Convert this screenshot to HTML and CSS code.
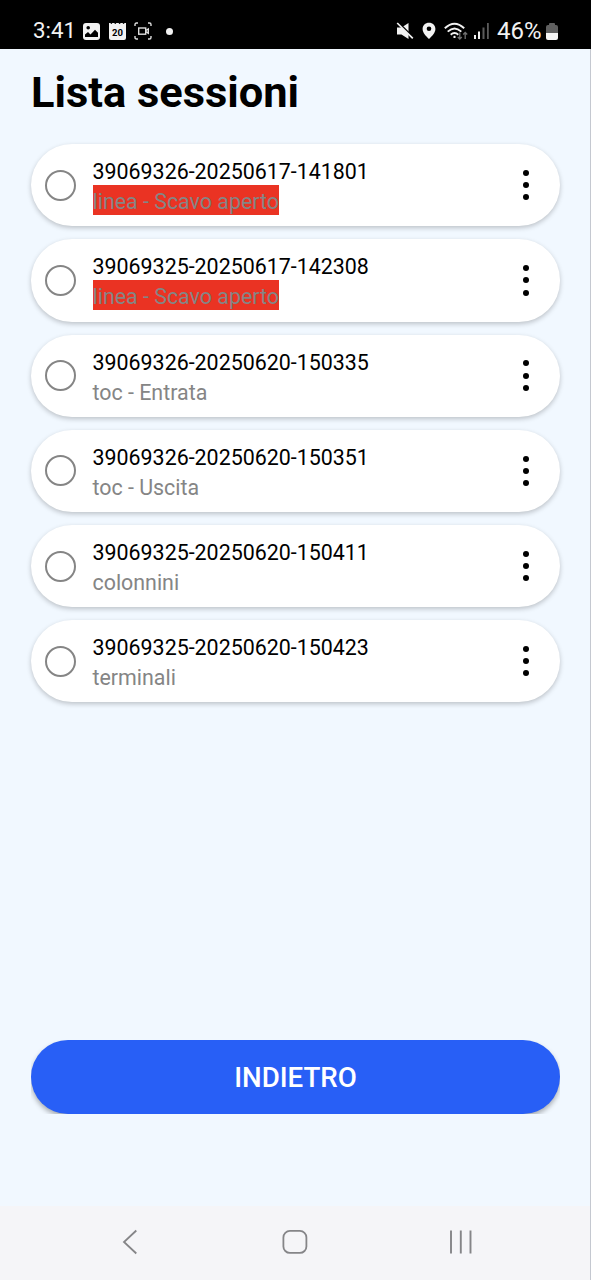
FILE: index.html
```html
<!DOCTYPE html>
<html lang="it">
<head>
<meta charset="utf-8">
<title>Lista sessioni</title>
<link rel="stylesheet" href="styles.css">
</head>
<body>
<div class="screen">
  <header class="status">
    <div class="status-left">
      <span class="clock">3:41</span>
      <svg class="ic-photo" width="17" height="17" viewBox="0 0 17 17"><rect width="17" height="17" rx="3" fill="#f2f2f2"/><circle cx="5.2" cy="4.8" r="1.8"/><path d="M2 14V11.5L5 9l2.5 2.5L12 6.8l3 3V14Z"/></svg>
      <svg class="ic-cal" width="17" height="17" viewBox="0 0 17 17"><path d="M0 0h1.5q.8 2 1.8 0h2q1 2 2 0h2.3q1 2 2 0h2q1 2 1.9 0H17v15q0 2-2 2H2q-2 0-2-2Z" fill="#f2f2f2"/><text x="8.5" y="12.8" text-anchor="middle" class="cal-day">20</text></svg>
      <svg class="ic-rec" width="18" height="18" viewBox="0 0 18 18" fill="none" stroke="#ddd" stroke-width="1.4"><path d="M1 4V2.5Q1 1 2.5 1H4M14 1h1.5Q17 1 17 2.500V4M17 14v1.500q0 1.500-1.500 1.500H14M4 17H2.500Q1 17 1 15.500V14"/><rect x="4.700" y="6" width="7" height="6.200"/><path d="m11.700 8.500 2.600-1.500v4.200l-2.600-1.500"/></svg>
      <span class="dot"></span>
    </div>
    <div class="status-right">
      <svg class="ic-mute" width="18" height="18" viewBox="0 0 18 18"><path d="M1 5.500h4.500L12.500 1v16L5.500 12.500H1Z" fill="#f2f2f2"/><path d="M1.600 0 17.500 15.600" stroke="#000" stroke-width="2"/><path d="M1.200 1 16.800 16.400" stroke="#f2f2f2" stroke-width="1.700"/></svg>
      <svg class="ic-pin" width="14" height="18" viewBox="0 0 14 18"><path d="M7 .8C3.200.8.600 3.500.600 7c0 4 3.600 7.200 6.400 10 2.800-2.800 6.400-6 6.400-10C13.400 3.500 10.800.8 7 .8Z" fill="#f2f2f2"/><circle cx="7" cy="6.700" r="2.300"/></svg>
      <svg class="ic-wifi" width="24" height="19" viewBox="0 0 24 19" fill="none" stroke="#f2f2f2" stroke-width="1.900"><path d="M.8 6.300q9.700-9.200 19.400 0M3.700 9.600q6.800-6.400 13.600 0M6.700 12.800q3.800-3.500 7.600 0"/><circle cx="10.500" cy="14.900" r="1.200" fill="#f2f2f2" stroke="none"/><path d="M15.800 10.500v6.500m-2-2 2 2 2-2M21.200 17v-6.500m-2 2 2-2 2 2" stroke="#707070" stroke-width="1.300"/></svg>
      <svg class="ic-signal" width="15" height="16" viewBox="0 0 15 16"><path fill="#f2f2f2" d="M0 12h2v4H0zM4 8.500h2V16H4z"/><path fill="#5c5c5c" d="M8.500 4.500h2V16h-2zM13 0h1.800v16H13z"/></svg>
      <span class="battery-text">46%</span>
      <svg class="ic-batt" width="12" height="17" viewBox="0 0 12 17"><path d="M3 2V1q0-1 1-1h4q1 0 1 1v1h1q2 0 2 2v6H0V4q0-2 2-2Z" fill="#606060"/><path d="M0 10h12v5q0 2-2 2H2q-2 0-2-2Z" fill="#f5f5f5"/></svg>
    </div>
  </header>

  <main class="content">
    <h1 class="title">Lista sessioni</h1>
    <ul class="sessions">
      <li class="card"><span class="radio"></span><div class="info"><span class="code">39069326-20250617-141801</span><span class="kind alert">linea - Scavo aperto</span></div><span class="more"><i></i><i></i><i></i></span></li>
      <li class="card"><span class="radio"></span><div class="info"><span class="code">39069325-20250617-142308</span><span class="kind alert">linea - Scavo aperto</span></div><span class="more"><i></i><i></i><i></i></span></li>
      <li class="card"><span class="radio"></span><div class="info"><span class="code">39069326-20250620-150335</span><span class="kind">toc - Entrata</span></div><span class="more"><i></i><i></i><i></i></span></li>
      <li class="card"><span class="radio"></span><div class="info"><span class="code">39069326-20250620-150351</span><span class="kind">toc - Uscita</span></div><span class="more"><i></i><i></i><i></i></span></li>
      <li class="card"><span class="radio"></span><div class="info"><span class="code">39069325-20250620-150411</span><span class="kind">colonnini</span></div><span class="more"><i></i><i></i><i></i></span></li>
      <li class="card"><span class="radio"></span><div class="info"><span class="code">39069325-20250620-150423</span><span class="kind">terminali</span></div><span class="more"><i></i><i></i><i></i></span></li>
    </ul>
    <div class="action"><button class="back">INDIETRO</button></div>
  </main>

  <nav class="navbar">
    <svg width="16" height="26" viewBox="0 0 16 26"><path d="M14.300 1.500 2 13l12.300 11.500" fill="none" stroke="#858588" stroke-width="1.800"/></svg>
    <svg class="home" width="26" height="26" viewBox="0 0 26 26"><rect x="1.400" y="1.900" width="23" height="22" rx="6.500" fill="none" stroke="#858588" stroke-width="1.800"/></svg>
    <svg width="24" height="26" viewBox="0 0 24 26"><path d="M2 1.500v23M11.800 1.500v23M21.500 1.500v23" stroke="#858588" stroke-width="1.900"/></svg>
  </nav>
</div>
</body>
</html>
```
FILE: styles.css
```css
* { box-sizing: border-box; }
body { margin: 0; font-family: Roboto, sans-serif; }
.screen {
  width: 591px;
  height: 1280px;
  display: flex;
  flex-direction: column;
  background: #f1f8ff;
}
.status {
  height: 49px;
  flex: none;
  display: flex;
  justify-content: space-between;
  padding: 13px 33px 0;
  background: #000;
  color: #f2f2f2;
}
.status-left, .status-right { display: flex; align-items: center; height: 36px; }
.clock { width: 50px; padding-bottom: 2px; font-size: 22.300px; line-height: 34px; }
.cal-day { font: bold 9.5px Roboto, sans-serif; fill: #000; }
.ic-cal { margin-left: 9px; }
.ic-rec { margin-left: 8px; }
.dot { width: 7px; height: 7px; margin-left: 14px; border-radius: 50%; background: #f2f2f2; }
.ic-pin { margin-left: 8px; }
.ic-wifi { margin-left: 8px; }
.ic-signal { margin-left: 6px; }
.battery-text { width: 49px; margin-left: 8px; font-size: 24px; line-height: 36px; }
.content {
  flex: 1;
  display: flex;
  flex-direction: column;
  padding: 18px 30px 92px 31px;
  border-right: 1px solid #c4c8d0;
}
.title { margin: 0; font-size: 43.400px; line-height: 52px; font-weight: 700; color: #000; }
.sessions {
  display: flex;
  flex-direction: column;
  gap: 13px;
  margin: 25.200px 0 0;
  padding: 0;
  list-style: none;
}
.card {
  display: flex;
  align-items: center;
  height: 82.2px;
  padding: 0 30px 0 14px;
  border-radius: 41px;
  background: #fff;
  box-shadow: 0 2px 5px rgba(0, 0, 0, .22);
}
.radio { width: 31px; height: 31px; border: 2px solid #858585; border-radius: 50%; }
.info {
  flex: 1;
  display: flex;
  flex-direction: column;
  align-items: flex-start;
  padding-left: 16.500px;
}
.code { padding-top: 4px; font-size: 21.4px; line-height: 26px; color: #000; }
.kind { padding-top: 4px; font-size: 21.4px; line-height: 26px; color: #858585; }
.alert { background: #ea3323; }
.more { display: flex; flex-direction: column; gap: 6.200px; width: 6px; margin-right: 1px; }
.more i { width: 6px; height: 6px; border-radius: 50%; background: #000; }
.action { margin-top: auto; overflow: hidden; }
.back {
  display: block;
  width: 100%;
  height: 74px;
  padding: 0;
  border: 0;
  border-radius: 37px;
  background: #285ff6;
  box-shadow: 0 3px 5px rgba(0, 0, 0, .3);
  color: #fff;
  font: 500 27.700px Roboto, sans-serif;
}
.navbar {
  flex: none;
  display: flex;
  justify-content: space-between;
  height: 74px;
  padding: 23px 117px 0 122px;
  border-right: 1px solid #c4c8d0;
  background: #f5f5f8;
}
.home { margin-left: 3px; }
```
